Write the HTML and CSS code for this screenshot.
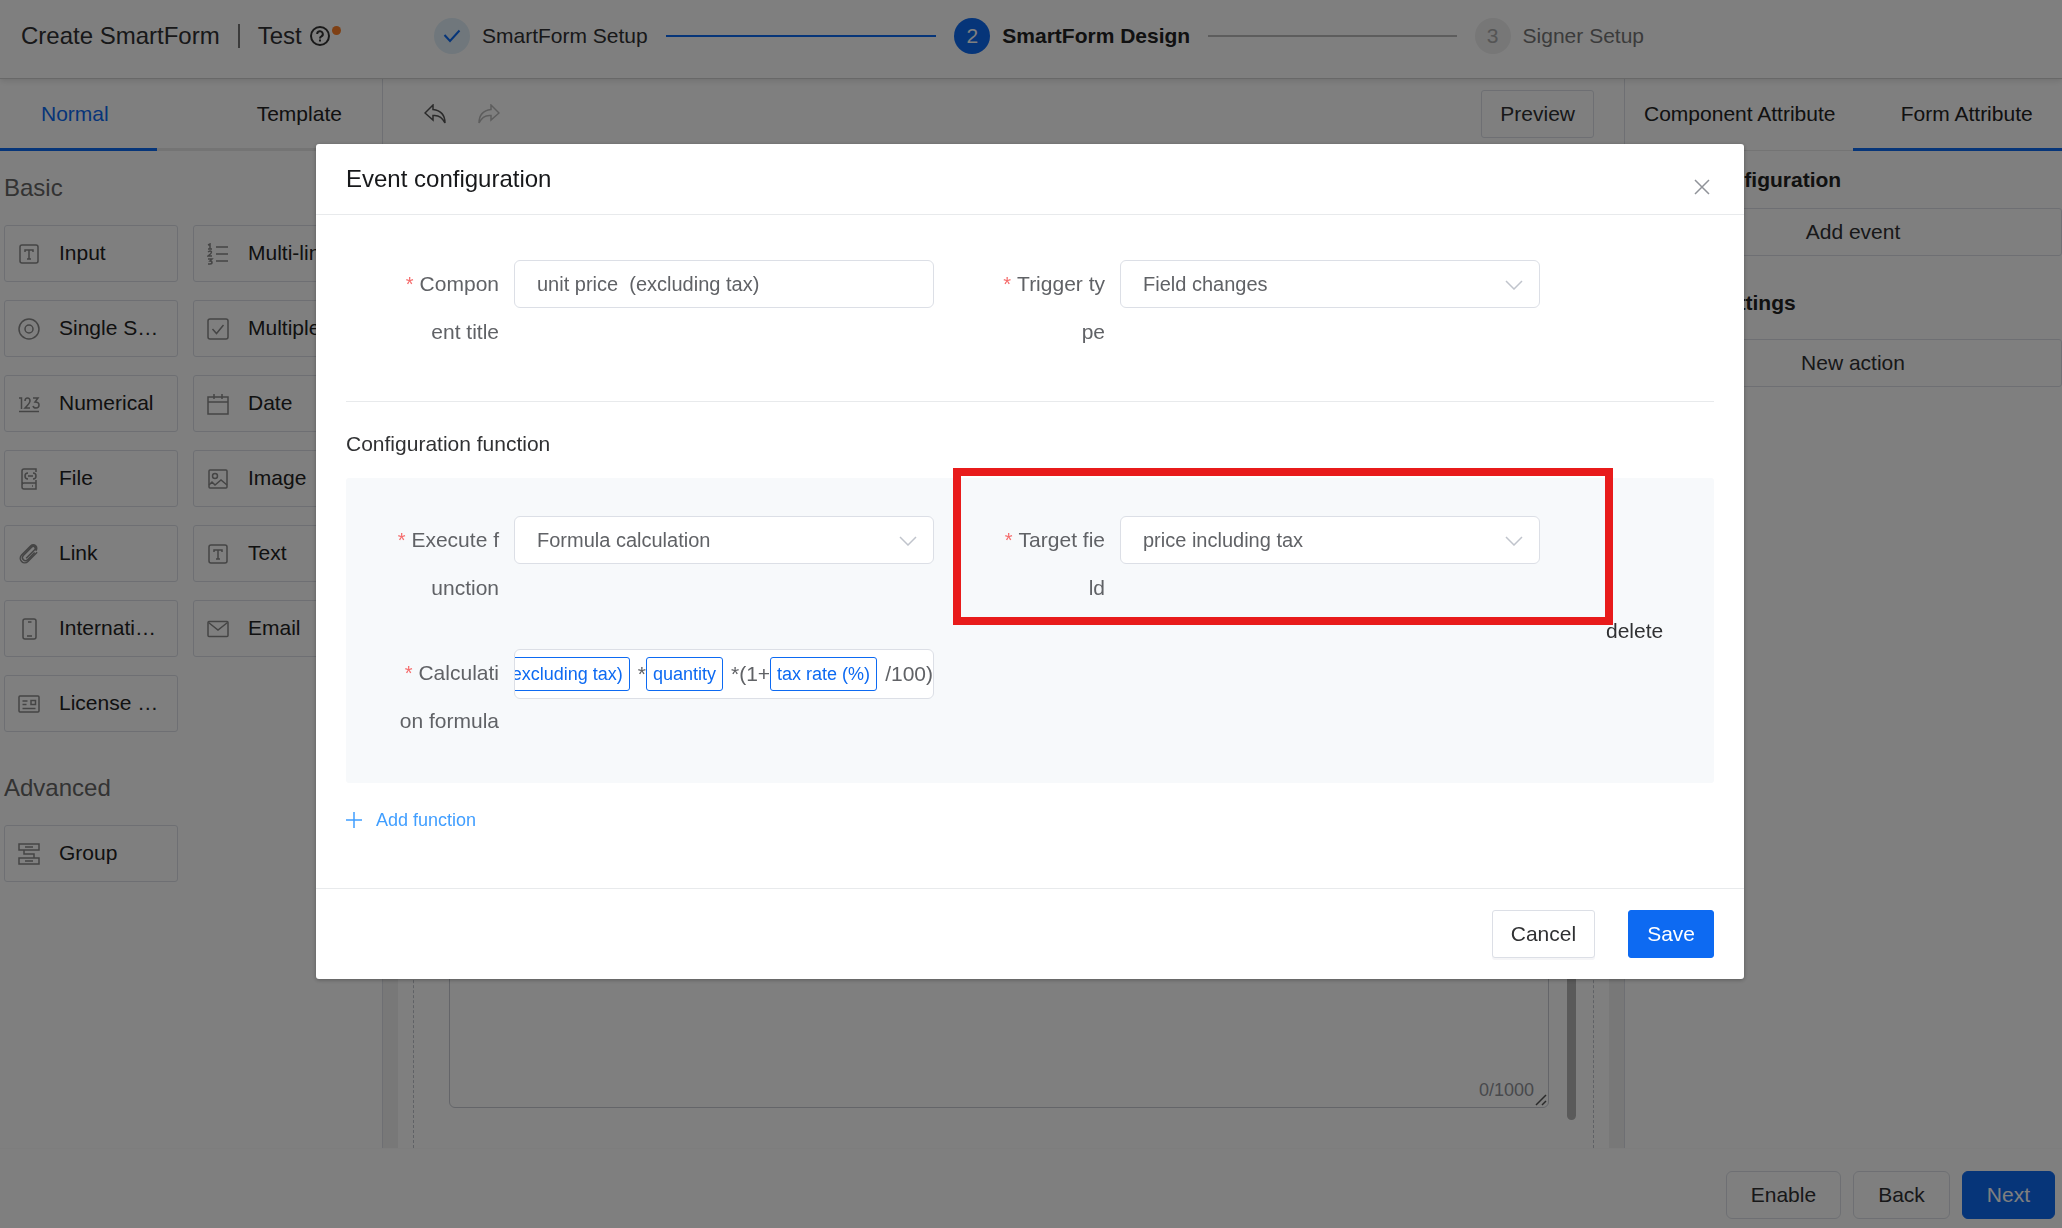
FILE: index.html
```html
<!DOCTYPE html>
<html lang="en">
<head>
  <meta charset="UTF-8">
  <meta name="viewport" content="width=device-width, initial-scale=1.0">
  <title>Create SmartForm</title>
  <link rel="stylesheet" href="styles.css">
</head>
<body>

  <header class="header">
    <div class="header-title">
      <span>Create SmartForm</span>
      <span class="bar"></span>
      <span>Test</span>
      <span class="help">
        <svg width="20" height="20" viewBox="0 0 20 20" fill="none" stroke="#333" stroke-width="2"><circle cx="10" cy="10" r="9"/><path d="M7.2 8a2.8 2.8 0 1 1 4.2 2.4c-1 .6-1.4 1-1.4 2M10 13.6v1.8"/></svg>
        <i class="dot"></i>
      </span>
    </div>
    <ol class="steps">
      <li class="step done">
        <span class="circle"><svg width="18" height="14" viewBox="0 0 18 14" fill="none" stroke="#0d6af2" stroke-width="2"><path d="M1.500 6l5.500 6L16.500 1.500"/></svg></span>
        <span>SmartForm Setup</span>
        <span class="line"></span>
      </li>
      <li class="step active">
        <span class="circle">2</span>
        <span>SmartForm Design</span>
        <span class="line"></span>
      </li>
      <li class="step wait">
        <span class="circle">3</span>
        <span>Signer Setup</span>
      </li>
    </ol>
  </header>

  <main class="main">
    <aside class="sidebar">
      <div class="tabs">
        <button type="button" class="tab tab-normal selected">Normal</button>
        <button type="button" class="tab tab-template">Template</button>
      </div>
      <h2 class="group-title">Basic</h2>
      <div class="cards">
        <button type="button" class="card"><svg class="icon" viewBox="0 0 22 22"><rect x="2" y="2" width="18" height="18" rx="2"/><path d="M7 9V7h8v2M11 7v9M9 16h4"/></svg><span>Input</span></button>
        <button type="button" class="card"><svg class="icon" viewBox="0 0 22 22"><path d="M9 4h12M9 11h12M9 18h12M1 2l2-1v5M1 6h4M1 9q3-2 3.500 0q0 1.500-3.500 4h4M1 16h4l-2 2q2 0 2 1.500t-2 1.500h-2"/></svg><span>Multi-line input</span></button>
        <button type="button" class="card"><svg class="icon" viewBox="0 0 22 22"><circle cx="11" cy="11" r="10"/><circle cx="11" cy="11" r="4"/></svg><span>Single Selection</span></button>
        <button type="button" class="card"><svg class="icon" viewBox="0 0 22 22"><rect x="1" y="1" width="20" height="20" rx="2"/><path d="M5.500 11l4 4.500L16.500 7"/></svg><span>Multiple Selection</span></button>
        <button type="button" class="card"><svg class="icon" viewBox="0 0 22 22"><path d="M1 5h2.500v11M7 8q0-3 2.500-3t2.500 3q0 2-5 7h5M15 5h5l-3 4q4 0 4 3t-3 3q-2.500 0-3-2M1 18.500h20"/></svg><span>Numerical</span></button>
        <button type="button" class="card"><svg class="icon" viewBox="0 0 22 22"><path d="M1 4h20v17H1zM1 9h20M7 1v5M15 1v5"/></svg><span>Date</span></button>
        <button type="button" class="card"><svg class="icon" viewBox="0 0 22 22"><path d="M18 4V1H6q-2 0-2 2v16q0 2 2 2h12v-6H6q-2 0-2 2M10 5q-3 0-3 3t3 3M15 5q3 0 3 3t-3 3M10 8h5M14 18h1M18 12v4"/></svg><span>File</span></button>
        <button type="button" class="card"><svg class="icon" viewBox="0 0 22 22"><rect x="2" y="2" width="18" height="18" rx="1"/><circle cx="8" cy="8" r="2.500"/><path d="M2 17l3-3 3 3 6-5 6 5"/></svg><span>Image</span></button>
        <button type="button" class="card"><svg class="icon" viewBox="0 0 22 22"><g transform="rotate(45 11 11)"><path d="M14 6v10a3 3 0 0 1-6 0V4a2 2 0 0 1 4 0v12M15.500 4v13a4.500 4.500 0 0 1-9 0V4a3.500 3.500 0 0 1 7 0"/></g></svg><span>Link</span></button>
        <button type="button" class="card"><svg class="icon" viewBox="0 0 22 22"><rect x="2" y="2" width="18" height="18" rx="2"/><path d="M7 9V7h8v2M11 7v9M9 16h4"/></svg><span>Text</span></button>
        <button type="button" class="card"><svg class="icon" viewBox="0 0 22 22"><rect x="5" y="1" width="13" height="20" rx="2"/><path d="M10 4h3.500M9 18h5"/></svg><span>International phone</span></button>
        <button type="button" class="card"><svg class="icon" viewBox="0 0 22 22"><rect x="1" y="3.500" width="20" height="15" rx="1"/><path d="M1.500 4.500L11 12l9.500-7.500"/></svg><span>Email</span></button>
        <button type="button" class="card"><svg class="icon" viewBox="0 0 22 22"><rect x="1" y="3" width="20" height="16" rx="1"/><path d="M4.500 8h5M4.500 11.500h4M4.500 15.500h13M13 7.500h4.500v4H13z"/></svg><span>License plate</span></button>
      </div>
      <h2 class="group-title advanced">Advanced</h2>
      <div class="cards">
        <button type="button" class="card"><svg class="icon" viewBox="0 0 22 22"><path d="M1 1h20v6H1zM1 15h20v6H1zM7 4h8M7 18h8M6 7v4h10v4"/></svg><span>Group</span></button>
      </div>
    </aside>

    <section class="editor">
      <div class="toolbar">
        <button type="button" class="tool" aria-label="Undo"><svg width="22" height="20" viewBox="0 0 22 20" fill="none" stroke="#555" stroke-width="1.500"><path d="M9 1L1 9l8 7v-4.500q8-1 12 7.500q0-12-12-13.500z"/></svg></button>
        <button type="button" class="tool" aria-label="Redo"><svg width="22" height="20" viewBox="0 0 22 20" fill="none" stroke="#bbb" stroke-width="1.500"><path d="M13 1l8 8-8 7v-4.500Q5 10.500 1 19 1 7 13 5.500z"/></svg></button>
        <button type="button" class="btn preview">Preview</button>
      </div>
      <div class="canvas">
        <div class="paper">
          <div class="frame">
            <div class="text-box">
              <textarea aria-label="Multi-line input"></textarea>
              <span class="counter">0/1000</span>
              <svg class="resizer" viewBox="0 0 12 12"><path d="M1 11L11 1M7 11l4-4"/></svg>
            </div>
            <div class="scroll-thumb"></div>
          </div>
        </div>
      </div>
    </section>

    <aside class="attributes">
      <div class="tabs">
        <button type="button" class="tab tab-component">Component Attribute</button>
        <button type="button" class="tab tab-form selected">Form Attribute</button>
      </div>
      <div class="attribute-list">
        <h3>Event configuration</h3>
        <button type="button" class="btn wide">Add event</button>
        <h3>Action settings</h3>
        <button type="button" class="btn wide">New action</button>
      </div>
    </aside>
  </main>

  <footer class="footer">
    <button type="button" class="btn round">Enable</button>
    <button type="button" class="btn round">Back</button>
    <button type="button" class="btn round primary">Next</button>
  </footer>

  <div class="overlay">
    <form class="modal" role="dialog" aria-labelledby="modalTitle">
      <div class="modal-header">
        <h1 id="modalTitle">Event configuration</h1>
        <button type="button" class="close" aria-label="Close"><svg width="16" height="16" viewBox="0 0 16 16" stroke="#909399" stroke-width="1.500"><path d="M1 1l14 14M15 1L1 15"/></svg></button>
      </div>

      <div class="modal-body">
        <div class="row">
          <div class="field">
            <label for="componentTitle"><b>*</b>Compon<br>ent title</label>
            <input class="control" type="text" id="componentTitle" value="unit price  (excluding tax)">
          </div>
          <div class="field">
            <label for="triggerType"><b>*</b>Trigger ty<br>pe</label>
            <div class="select">
              <select class="control" id="triggerType"><option>Field changes</option></select>
              <svg class="chevron" viewBox="0 0 18 10"><path d="M1 1l8 8 8-8"/></svg>
            </div>
          </div>
        </div>

        <h2 class="section-title">Configuration function</h2>

        <div class="function-box">
          <div class="function-rows">
            <div class="row">
              <div class="field">
                <label for="executeFunction"><b>*</b>Execute f<br>unction</label>
                <div class="select">
                  <select class="control" id="executeFunction"><option>Formula calculation</option></select>
                  <svg class="chevron" viewBox="0 0 18 10"><path d="M1 1l8 8 8-8"/></svg>
                </div>
              </div>
              <div class="field highlight">
                <label for="targetField"><b>*</b>Target fie<br>ld</label>
                <div class="select">
                  <select class="control" id="targetField"><option>price including tax</option></select>
                  <svg class="chevron" viewBox="0 0 18 10"><path d="M1 1l8 8 8-8"/></svg>
                </div>
              </div>
            </div>
            <div class="row">
              <div class="field">
                <label id="formulaLabel"><b>*</b>Calculati<br>on formula</label>
                <div class="control formula" role="textbox" tabindex="0" aria-labelledby="formulaLabel">
                  <span class="chip">unit price&nbsp; (excluding tax)</span><span class="op">*</span><span class="chip">quantity</span><span class="op">*(1+</span><span class="chip">tax rate (%)</span><span class="op">/100)</span>
                </div>
              </div>
            </div>
          </div>
          <button type="button" class="delete">delete</button>
        </div>

        <button type="button" class="add-function">
          <svg width="16" height="16" viewBox="0 0 16 16" stroke="#409eff" stroke-width="1.500"><path d="M8 0v16M0 8h16"/></svg>
          Add function
        </button>
      </div>

      <div class="modal-footer">
        <button type="button" class="btn cancel">Cancel</button>
        <button type="submit" class="btn primary">Save</button>
      </div>
    </form>
  </div>

</body>
</html>
```
FILE: styles.css
```css
* {
  box-sizing: border-box;
}

body {
  margin: 0;
  height: 100vh;
  display: flex;
  flex-direction: column;
  overflow: hidden;
  background: #fff;
  color: #303133;
  font-family: "Liberation Sans", Arial, Helvetica, sans-serif;
  font-size: 21px;
}

button, input, select, textarea {
  font-family: inherit;
  font-size: 21px;
  color: inherit;
}

button {
  padding: 0;
  border: 0;
  background: none;
}

h1, h2, h3 {
  margin: 0;
  font-weight: normal;
}

.btn {
  height: 48px;
  padding: 0 18px;
  border: 1px solid #dcdfe6;
  border-radius: 3px;
  background: #fff;
}

.btn.round {
  border-radius: 6px;
  padding: 0 24px;
}

.btn.primary {
  background: #0d6af2;
  border-color: #0d6af2;
  color: #fff;
}

/* header */
.header {
  flex: none;
  height: 79px;
  display: flex;
  align-items: center;
  padding-bottom: 6px;
  border-bottom: 1px solid #d0d0d0;
  box-shadow: 0 2px 6px rgba(0, 0, 0, 0.12);
  z-index: 1;
}

.header-title {
  flex: 0 0 434px;
  display: flex;
  align-items: center;
  padding-left: 21px;
  font-size: 24px;
}

.bar {
  width: 2px;
  height: 24px;
  margin: 0 18px;
  background: #777;
}

.help {
  position: relative;
  display: flex;
  margin-left: 8px;
}

.dot {
  position: absolute;
  top: 0;
  right: -11px;
  width: 9px;
  height: 9px;
  border-radius: 50%;
  background: #ff8128;
}

.steps {
  flex: 0 1 1210px;
  display: flex;
  margin: 0;
  padding: 0;
  list-style: none;
}

.step {
  flex: 1;
  display: flex;
  align-items: center;
  white-space: nowrap;
}

.step:last-child {
  flex: none;
}

.circle {
  width: 36px;
  height: 36px;
  margin-right: 12px;
  display: flex;
  align-items: center;
  justify-content: center;
  border-radius: 50%;
  background: #e0eff8;
}

.line {
  flex: 1;
  height: 2px;
  margin: 0 18px;
  background: #bbb;
}

.done .line {
  background: #0d6af2;
}

.active {
  font-weight: bold;
  color: #222;
}

.active .circle {
  background: #0d6af2;
  font-weight: normal;
  color: #fff;
}

.wait {
  color: #777;
}

.wait .circle {
  background: #eee;
  color: #aaa;
}

/* page columns */
.main {
  flex: 1;
  min-height: 0;
  display: flex;
  border-bottom: 1px solid #fafafa;
}

.sidebar {
  flex: 0 0 383px;
  border-right: 1px solid #dcdfe6;
  overflow: hidden;
}

.tabs {
  height: 72px;
  display: flex;
  box-shadow: inset 0 -3px #e8e8e8;
}

.tab {
  border-bottom: 3px solid transparent;
  color: #222;
  white-space: nowrap;
}

.tab.selected {
  border-color: #0d6af2;
}

.tab-normal {
  padding-left: 41px;
  padding-right: 48px;
}

.tab-normal.selected {
  color: #0d6af2;
}

.tab-template {
  padding-left: 100px;
}

.group-title {
  padding: 22px 4px;
  font-size: 24px;
  line-height: 30px;
  color: #666;
}

.group-title.advanced {
  padding-top: 41px;
}

.cards {
  display: grid;
  grid-template-columns: 174px 174px;
  gap: 18px 15px;
  padding-left: 4px;
}

.card {
  height: 57px;
  display: flex;
  align-items: center;
  padding: 0 13px;
  border: 1px solid #dcdfe6;
  border-radius: 3px;
  text-align: left;
  color: #222;
}

.card span {
  flex: 1;
  padding-bottom: 2px;
  overflow: hidden;
  text-overflow: ellipsis;
  white-space: nowrap;
}

.icon {
  flex: none;
  width: 22px;
  height: 22px;
  margin-right: 19px;
  fill: none;
  stroke: #8a8a8a;
  stroke-width: 1.500;
}

.editor {
  flex: 1;
  min-width: 0;
  display: flex;
  flex-direction: column;
}

.toolbar {
  flex: none;
  height: 72px;
  display: flex;
  align-items: center;
  gap: 32px;
  padding: 0 30px 2px 41px;
}

.toolbar .preview {
  margin-left: auto;
}

.tool svg {
  display: block;
}

.canvas {
  flex: 1;
  min-height: 0;
  padding: 0 15px;
  background: #f0f0f0;
}

.paper {
  height: 100%;
  padding: 0 15px;
  background: #fff;
}

.frame {
  height: 100%;
  display: flex;
  gap: 18px;
  padding: 0 17px 0 35px;
  border-left: 1px dashed #c0c4cc;
  border-right: 1px dashed #c0c4cc;
}

.text-box {
  position: relative;
  flex: 1;
  padding: 40px 0;
}

.text-box textarea {
  display: block;
  width: 100%;
  height: 100%;
  border: 1px solid #c8cbd2;
  border-radius: 6px;
  resize: none;
}

.counter {
  position: absolute;
  right: 15px;
  bottom: 47px;
  font-size: 18px;
  color: #909399;
}

.resizer {
  position: absolute;
  right: 2px;
  bottom: 42px;
  width: 12px;
  height: 12px;
  stroke: #555;
  stroke-width: 1.500;
}

.scroll-thumb {
  width: 9px;
  margin-bottom: 28px;
  border-radius: 5px;
  background: #b4b4b4;
}

.attributes {
  flex: 0 0 438px;
  border-left: 1px solid #dcdfe6;
}

.attributes .tabs {
  box-shadow: inset 0 -1px #e8e8e8;
}

.tab-component {
  padding-left: 19px;
  padding-right: 18px;
}

.tab-form {
  flex: 1;
  padding-left: 18px;
}

.attribute-list {
  padding-left: 19px;
}

.attribute-list h3 {
  padding: 16px 0;
  font-size: 21px;
  font-weight: bold;
  line-height: 25px;
  color: #222;
}

.attribute-list .btn + h3 {
  padding: 34px 0 24px;
}

.wide {
  display: block;
  width: 100%;
}

.footer {
  flex: none;
  height: 79px;
  display: flex;
  align-items: center;
  justify-content: flex-end;
  gap: 12px;
  padding: 12px 7px 0;
}

/* dialog */
.overlay {
  position: fixed;
  inset: 0;
  z-index: 10;
  padding: 144px 2px 0 0;
  background: rgba(0, 0, 0, 0.5);
}

.modal {
  width: 90%;
  max-width: 1428px;
  margin: 0 auto;
  border-radius: 3px;
  background: #fff;
  box-shadow: 0 1px 4px rgba(0, 0, 0, 0.3);
}

.modal-header {
  display: flex;
  justify-content: space-between;
  height: 71px;
  padding: 0 34px 0 30px;
  border-bottom: 1px solid #e8eaec;
}

.modal-header h1 {
  font-size: 24px;
  line-height: 70px;
  color: #17181a;
}

.close {
  align-self: flex-end;
  height: 54px;
}

.close svg {
  display: block;
}

.modal-body {
  padding: 45px 30px 55px;
}

.row {
  display: flex;
  gap: 66px;
  padding-left: 48px;
}

.field {
  flex: 0 1 540px;
  display: flex;
  align-items: flex-start;
  min-width: 0;
}

.field label {
  flex: 0 0 120px;
  padding-right: 15px;
  line-height: 48px;
  text-align: right;
  white-space: nowrap;
  color: #606266;
}

.field b {
  margin-right: 6px;
  font-size: 20px;
  font-weight: normal;
  color: #f56c6c;
}

.control {
  flex: 1;
  width: 100%;
  min-width: 0;
  height: 48px;
  padding: 0 22px;
  border: 1px solid #dcdfe6;
  border-radius: 6px;
  background: #fff;
  font-size: 20px;
  color: #606266;
}

.select {
  position: relative;
  flex: 1;
}

.select select {
  display: block;
  appearance: none;
}

.chevron {
  position: absolute;
  right: 17px;
  top: 20px;
  width: 18px;
  height: 10px;
  fill: none;
  stroke: #c0c4cc;
  stroke-width: 1.500;
  pointer-events: none;
}

.section-title {
  margin-top: 45px;
  padding: 26px 0 18px;
  border-top: 1px solid #e8eaec;
  font-size: 21px;
  line-height: 32px;
}

.function-box {
  display: flex;
  align-items: center;
  gap: 66px;
  padding: 38px 0;
  border-radius: 3px;
  background: #f7f9fb;
}

.function-rows {
  flex: 0 1 1194px;
  display: flex;
  flex-direction: column;
  gap: 37px;
}

.highlight {
  position: relative;
}

/* frame around the target field */
.highlight::after {
  content: "";
  position: absolute;
  inset: -48px -73px -13px -47px;
  z-index: 1;
  border: 8px solid #e81b1b;
  pointer-events: none;
}

.formula {
  display: flex;
  align-items: center;
  justify-content: flex-end;
  height: 50px;
  padding: 0;
  overflow: hidden;
  font-size: 21px;
  white-space: nowrap;
}

.chip {
  flex: none;
  height: 34px;
  padding: 0 6px;
  border: 1px solid #0d6af2;
  border-radius: 3px;
  font-size: 18px;
  line-height: 32px;
  color: #0d6af2;
}

.op {
  flex: none;
  padding-left: 8px;
}

.add-function {
  display: flex;
  align-items: center;
  gap: 14px;
  margin-top: 24px;
  font-size: 18px;
  line-height: 26px;
  color: #409eff;
}

.modal-footer {
  display: flex;
  justify-content: flex-end;
  gap: 33px;
  padding: 21px 30px;
  border-top: 1px solid #e8eaec;
}

.cancel {
  box-shadow: 0 2px 0 #f5f5f7;
}
```
